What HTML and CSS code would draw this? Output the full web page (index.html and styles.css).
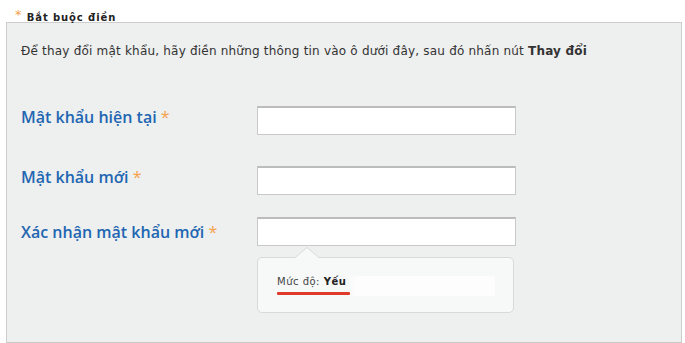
FILE: index.html
```html
<!DOCTYPE html>
<html lang="vi">
<head>
    <meta charset="UTF-8">
    <meta name="viewport" content="width=device-width, initial-scale=1.0">
    <title>Đổi mật khẩu</title>
    <link rel="stylesheet" href="styles.css">
</head>
<body>

    <div class="legend"><span class="req">*</span> Bắt buộc điền</div>

    <div class="panel">
        <p class="intro">Để thay đổi mật khẩu, hãy điền những thông tin vào ô dưới đây, sau đó nhấn nút <b>Thay đổi</b></p>

        <form class="form">
            <div class="row row-1">
                <label for="oldPass">Mật khẩu hiện tại <span class="req">*</span></label>
                <input type="password" id="oldPass">
            </div>
            <div class="row row-2">
                <label for="newPass">Mật khẩu mới <span class="req">*</span></label>
                <input type="password" id="newPass">
            </div>
            <div class="row row-3">
                <label for="confirmPass">Xác nhận mật khẩu mới <span class="req">*</span></label>
                <input type="password" id="confirmPass">
            </div>

            <div class="tip">
                <div class="meter">
                    <div class="meter-text">Mức độ: <b>Yếu</b></div>
                    <div class="meter-bar" style="width: 73px"></div>
                </div>
            </div>
        </form>
    </div>

</body>
</html>
```

FILE: styles.css
```css
body {
    margin: 0;
    font-family: "DejaVu Sans", Verdana, sans-serif;
    background-color: #fff;
    width: 685px;
}

.req {
    color: #f5a24c;
    font-weight: normal;
}

.legend {
    height: 22px;
    padding-left: 15px;
    font-size: 10px;
    font-weight: bold;
    letter-spacing: 0.9px;
    color: #222;
    line-height: 30px;
    box-sizing: border-box;
}

.legend .req {
    font-size: 13px;
    vertical-align: 2px;
}

.panel {
    margin: 0 3px 0 6px;
    border: 1px solid #cdcdcd;
    border-bottom: 2px solid #c9c9c9;
    background-color: #eeefef;
    padding: 21px 14px 29px;
}

.intro {
    margin: 0;
    font-size: 12px;
    letter-spacing: 0.2px;
    line-height: 14px;
    color: #333;
}

.form {
    margin-top: 48px;
}

.row {
    display: flex;
    align-items: flex-start;
}

.row label {
    width: 236px;
    font-family: "Open Sans", sans-serif;
    font-size: 16px;
    font-weight: 600;
    color: #2266b2;
}

.row-1 label { padding-top: 0; }
.row-2 label { padding-top: 0; }
.row-3 label { padding-top: 4px; }

.row-2 { margin-top: 31px; }
.row-3 { margin-top: 22px; }

.row input {
    width: 259px;
    height: 29px;
    box-sizing: border-box;
    border: 1px solid #c9c9c9;
    border-top: 2px solid #bcbcbc;
    background-color: #fff;
    margin: 0;
}

.tip {
    position: relative;
    margin: 11px 0 0 236px;
    width: 257px;
    height: 56px;
    box-sizing: border-box;
    border: 1px solid #d9d9d9;
    border-radius: 5px;
    background-color: #f7f8f8;
    padding: 18px 19px 0;
}

.tip::before,
.tip::after {
    content: "";
    position: absolute;
    left: 36px;
    width: 0;
    height: 0;
    border-left: 13px solid transparent;
    border-right: 13px solid transparent;
}

.tip::before {
    top: -11px;
    border-bottom: 11px solid #d9d9d9;
}

.tip::after {
    top: -10px;
    border-bottom: 11px solid #f7f8f8;
}

.meter {
    width: 218px;
    height: 20px;
    background: linear-gradient(to right, #f7f8f8 70px, #fdfdfd 80px);
}

.meter-text {
    font-size: 10px;
    color: #444;
    letter-spacing: 0.5px;
}

.meter-text b {
    color: #222;
}

.meter-bar {
    margin-top: 5px;
    height: 3px;
    border-radius: 1px;
    background-color: #e03a2b;
}
```
